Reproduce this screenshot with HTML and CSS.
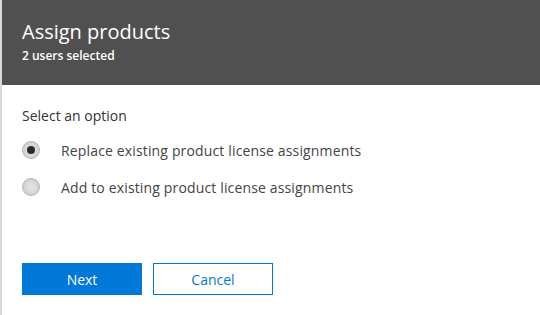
FILE: index.html
```html
<!DOCTYPE html>
<html lang="en">

<head>
    <meta charset="UTF-8">
    <meta name="viewport" content="width=device-width, initial-scale=1.0">
    <title>Assign products</title>
    <link rel="stylesheet" href="styles.css">
</head>

<body>
    <div class="panel">
        <header class="panel-header">
            <h1 class="panel-title">Assign products</h1>
            <p class="panel-subtitle">2 users selected</p>
        </header>
        <div class="panel-body">
            <p class="option-label">Select an option</p>
            <label class="option">
                <span class="radio radio--checked"></span>
                <span class="option-text">Replace existing product license assignments</span>
            </label>
            <label class="option">
                <span class="radio"></span>
                <span class="option-text">Add to existing product license assignments</span>
            </label>
            <div class="actions">
                <button class="btn btn--primary">Next</button>
                <button class="btn btn--outline">Cancel</button>
            </div>
        </div>
    </div>
</body>

</html>
```

FILE: styles.css
```css
/*
MAIN COLOR: #0078d7
HEADER: #505050
*/

* {
    margin: 0;
    padding: 0;
    box-sizing: border-box;
}

body {
    font-family: 'Open Sans', sans-serif;
    color: #333;
    background-color: #fff;
}

.panel {
    width: 540px;
    height: 315px;
    border-left: 2px solid #d9d9d9;
}

.panel-header {
    height: 85px;
    background-color: #505050;
    color: #fff;
    padding: 19px 20px 0;
}

.panel-title {
    font-size: 20px;
    font-weight: 400;
    line-height: 26px;
    margin-bottom: 3px;
}

.panel-subtitle {
    font-size: 12px;
    font-weight: 600;
    line-height: 16px;
}

.panel-body {
    padding: 21px 20px 0;
}

.option-label {
    font-size: 14px;
    line-height: 20px;
    margin-bottom: 14px;
}

.option {
    display: flex;
    align-items: center;
    gap: 21px;
    height: 20px;
    margin-bottom: 17px;
}

.radio {
    width: 18px;
    height: 18px;
    border-radius: 50%;
    border: 1px solid #b5b5b5;
    background: radial-gradient(circle, #e8e8e8 0%, #d4d4d4 60%, #c8c8c8 100%);
    display: flex;
    justify-content: center;
    align-items: center;
}

.radio--checked::after {
    content: "";
    width: 8px;
    height: 8px;
    border-radius: 50%;
    background-color: #2b2b2b;
}

.option-text {
    font-size: 14px;
    letter-spacing: 0.15px;
    color: #444;
}

.actions {
    display: flex;
    gap: 11px;
    margin-top: 66px;
}

.btn {
    width: 120px;
    height: 32px;
    font-family: inherit;
    font-size: 14px;
    cursor: pointer;
}

.btn--primary {
    background-color: #0078d7;
    border: none;
    color: #fff;
}

.btn--outline {
    background-color: #fff;
    border: 1px solid #0078d7;
    color: #0078d7;
}
```
